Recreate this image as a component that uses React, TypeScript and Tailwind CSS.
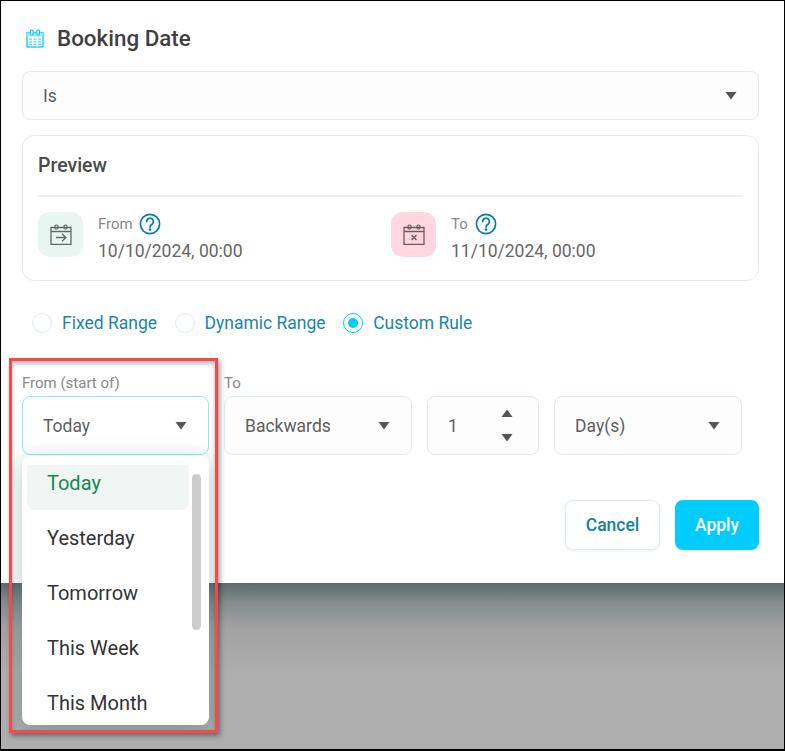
import React from 'react';

const Caret: React.FC = () => (
  <svg width="12" height="9" viewBox="0 0 12 9" className="shrink-0">
    <path d="M0.5 1h11L6 8.5z" fill="#555555" />
  </svg>
);

const HelpIcon: React.FC = () => (
  <svg width="22" height="22" viewBox="0 0 22 22" fill="none" className="shrink-0">
    <circle cx="11" cy="11" r="9.6" stroke="#007fa3" strokeWidth="1.7" />
    <path d="M7.6 8.6a3.4 3.4 0 1 1 5.5 2.6c-1.2.9-2.1 1.5-2.1 2.9" stroke="#007fa3" strokeWidth="1.8" strokeLinecap="round" />
    <circle cx="11" cy="16.6" r="1.3" fill="#007fa3" />
  </svg>
);

const HeaderCalendar: React.FC = () => (
  <svg width="18" height="19" viewBox="0 0 18 19" fill="none" className="shrink-0">
    <rect x="1" y="3.5" width="16" height="14.5" stroke="#00ccff" strokeWidth="1.3" />
    <rect x="1" y="3.5" width="16" height="4" fill="#9fe9ff" />
    <rect x="4.5" y="1" width="2.6" height="5" rx="1" fill="#ffffff" stroke="#00ccff" strokeWidth="1.2" />
    <rect x="10.9" y="1" width="2.6" height="5" rx="1" fill="#ffffff" stroke="#00ccff" strokeWidth="1.2" />
    <path d="M3 10.2h3M7.5 10.2h3M12 10.2h3M3 12.8h3M7.5 12.8h3M12 12.8h3M3 15.4h3M7.5 15.4h3M12 15.4h3" stroke="#4fdcff" strokeWidth="1.3" />
  </svg>
);

const PreviewCalendar: React.FC<{ kind: 'from' | 'to'; color: string }> = ({ kind, color }) => (
  <svg width="22" height="21" viewBox="0 0 22 21" fill="none">
    <path d="M1 3.5h20v17H1zM1 7.5h20" stroke={color} strokeWidth="1.3" />
    <rect x="5" y="1" width="3" height="4" rx="1.2" fill="none" stroke={color} strokeWidth="1.2" />
    <rect x="14" y="1" width="3" height="4" rx="1.2" fill="none" stroke={color} strokeWidth="1.2" />
    {kind === 'from' ? (
      <path d="M6 13.5h10M12 9.8l4 3.7-4 3.7" stroke={color} strokeWidth="1.3" />
    ) : (
      <path d="M8.5 11l5 5M13.5 11l-5 5" stroke={color} strokeWidth="1.5" />
    )}
  </svg>
);

const Radio: React.FC<{ label: string; checked?: boolean }> = ({ label, checked }) => (
  <label className="flex items-center gap-[10px]">
    {checked ? (
      <span className="flex h-5 w-5 items-center justify-center rounded-full border border-[#00ccff] bg-white">
        <span className="h-[10px] w-[10px] rounded-full bg-[#00ccff]" />
      </span>
    ) : (
      <span className="h-5 w-5 rounded-full border border-[#dcecef] bg-white" />
    )}
    <span className="text-[17.5px] leading-6 text-[#1a85a5]">{label}</span>
  </label>
);

const SelectBox: React.FC<{ value: string; className: string }> = ({ value, className }) => (
  <div className={`flex items-center justify-between rounded-lg border pl-5 pr-[21px] text-[17.5px] text-[#5f5f5f] ${className}`}>
    <span className="pt-[2px]">{value}</span>
    <Caret />
  </div>
);

const options = ['Today', 'Yesterday', 'Tomorrow', 'This Week', 'This Month'];

const App: React.FC = () => {
  return (
    <div
      className="relative flex h-[751px] w-[785px] flex-col overflow-hidden border border-b-2 border-black"
      style={{ fontFamily: 'Roboto, "Liberation Sans", sans-serif' }}
    >
      <div className="h-[582px] shrink-0 bg-white px-[21px] pt-[19px]">
        <div className="flex h-9 items-center gap-[13px] pl-[4px]">
          <HeaderCalendar />
          <h1 className="text-[22.4px] font-medium leading-9 text-[#3f3f3f]">Booking Date</h1>
        </div>

        <div className="mt-[15px] w-[737px]">
          <SelectBox value="Is" className="h-[49px] border-[#dcecef] bg-[#fdfdfd]" />
        </div>

        <div className="mt-[15px] h-[146px] w-[737px] rounded-xl border border-[#dcecef] px-[15px]">
          <div className="flex h-[61px] items-center border-b-2 border-[#f0f0f0] text-[19.5px] font-medium text-[#4a4a4a]">
            Preview
          </div>
          <div className="mt-[15px] flex">
            <div className="flex w-[353px] gap-[15px]">
              <div className="flex h-[45px] w-[45px] items-center justify-center rounded-xl bg-[#e8f6f2]">
                <PreviewCalendar kind="from" color="#5f6b68" />
              </div>
              <div>
                <div className="flex h-[24px] items-center gap-[6px] text-[15px] text-[#888888]">
                  From <HelpIcon />
                </div>
                <div className="text-[17.5px] leading-[30px] text-[#666666]">10/10/2024, 00:00</div>
              </div>
            </div>
            <div className="flex gap-[15px]">
              <div className="flex h-[45px] w-[45px] items-center justify-center rounded-xl bg-[#ffd6e1]">
                <PreviewCalendar kind="to" color="#6e5a60" />
              </div>
              <div>
                <div className="flex h-[24px] items-center gap-[7px] text-[15px] text-[#888888]">
                  To <HelpIcon />
                </div>
                <div className="text-[17.5px] leading-[30px] text-[#666666]">11/10/2024, 00:00</div>
              </div>
            </div>
          </div>
        </div>

        <div className="mt-[30px] flex h-6 items-center gap-[17.5px] pl-[10px]">
          <Radio label="Fixed Range" />
          <Radio label="Dynamic Range" />
          <Radio label="Custom Rule" checked />
        </div>

        <div className="mt-[39px] flex gap-[15px]">
          <div className="w-[187px]">
            <div className="h-[22px] text-[15px] leading-[19px] text-[#888888]">From (start of)</div>
            <SelectBox value="Today" className="h-[59px] border-[#8fe6ff] bg-white" />
          </div>
          <div className="w-[188px]">
            <div className="h-[22px] text-[15px] leading-[19px] text-[#888888]">To</div>
            <SelectBox value="Backwards" className="h-[59px] border-[#dcecef] bg-[#fdfdfd]" />
          </div>
          <div className="mt-[22px] flex h-[59px] w-[112px] items-center justify-between rounded-lg border border-[#dcecef] bg-[#fdfdfd] pl-5 pr-[25px] text-[17.5px] text-[#5f5f5f]">
            <span className="pt-[2px]">1</span>
            <div className="flex flex-col gap-[15px]">
              <svg width="12" height="9" viewBox="0 0 12 9"><path d="M0.5 8h11L6 0.5z" fill="#555555" /></svg>
              <svg width="12" height="9" viewBox="0 0 12 9"><path d="M0.5 1h11L6 8.5z" fill="#555555" /></svg>
            </div>
          </div>
          <div className="mt-[22px] w-[188px]">
            <SelectBox value="Day(s)" className="h-[59px] border-[#dcecef] bg-[#fdfdfd]" />
          </div>
        </div>

        <div className="mt-[45px] flex w-[737px] justify-end gap-[15px]">
          <button className="h-[50px] w-[95px] rounded-lg border border-[#dcecef] bg-white text-[17.5px] font-medium text-[#147f9f] shadow-[0_1px_3px_rgba(0,60,80,0.08)]">
            Cancel
          </button>
          <button className="h-[50px] w-[84px] rounded-lg bg-[#00ccff] text-[17.5px] font-medium text-white">
            Apply
          </button>
        </div>
      </div>

      {/* dimmed page behind the modal */}
      <div className="flex-1 bg-[linear-gradient(to_bottom,#5f6b6b_0px,#858c8c_20px,#a2a2a2_45px,#aeaeae_90px)]" />

      {/* red annotation frame, clips the dropdown shadow */}
      <div className="pointer-events-none absolute left-[8px] top-[357px] h-[375px] w-[209px] overflow-hidden border-[3px] border-[#f94848] shadow-[2px_3px_5px_rgba(0,0,0,0.4),inset_0_3px_4px_rgba(0,0,0,0.25)]">
        {/* open dropdown of the first select */}
        <div className="absolute left-[10px] top-[95px] flex h-[269px] w-[187px] rounded-lg bg-white pl-[5px] pr-[8px] pt-[9px] shadow-[0_6px_24px_rgba(0,90,90,0.3)]">
          <ul className="w-[162px]">
            {options.map((opt, i) => (
              <li
                key={opt}
                className={
                  i === 0
                    ? 'flex h-[45px] items-center rounded-b-lg bg-[#eff6f4] pb-[9px] pl-5 text-[20px] text-[#17894f]'
                    : 'flex h-[55px] items-center pl-5 text-[20px] text-[#333333]'
                }
              >
                {opt}
              </li>
            ))}
          </ul>
          <div className="ml-[3px] mt-[9px] h-[156px] w-[9px] rounded-full bg-[#cccccc]" />
        </div>
      </div>
    </div>
  );
};

export default App;
